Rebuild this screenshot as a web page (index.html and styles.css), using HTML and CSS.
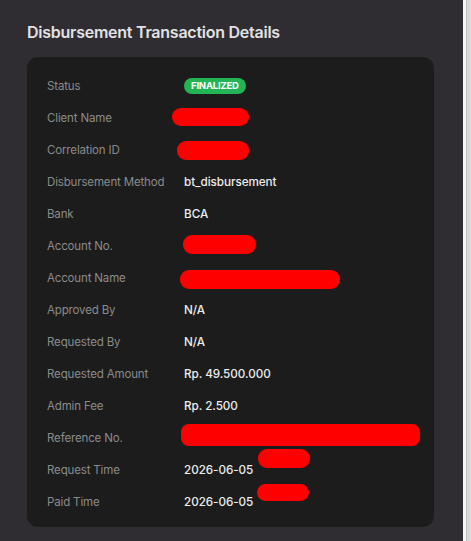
FILE: index.html
```html
<!DOCTYPE html>
<html lang="en">
  <head>
    <meta charset="UTF-8" />
    <meta name="viewport" content="width=device-width, initial-scale=1.0" />
    <title>Disbursement Transaction Details</title>
    <link rel="stylesheet" href="styles.css">
  </head>

  <body>
    <div class="page">
      <div class="panel">
        <h2 class="title">Disbursement Transaction Details</h2>

        <div class="card">
          <div class="row">
            <span class="label">Status</span>
            <span class="value"><span class="badge">FINALIZED</span></span>
          </div>
          <div class="row">
            <span class="label">Client Name</span>
            <span class="value"><span class="hidden hide-client"></span></span>
          </div>
          <div class="row">
            <span class="label">Correlation ID</span>
            <span class="value"><span class="hidden hide-corr"></span></span>
          </div>
          <div class="row">
            <span class="label">Disbursement Method</span>
            <span class="value">bt_disbursement</span>
          </div>
          <div class="row">
            <span class="label">Bank</span>
            <span class="value">BCA</span>
          </div>
          <div class="row">
            <span class="label">Account No.</span>
            <span class="value"><span class="hidden hide-accno"></span></span>
          </div>
          <div class="row">
            <span class="label">Account Name</span>
            <span class="value"><span class="hidden hide-accname"></span></span>
          </div>
          <div class="row">
            <span class="label">Approved By</span>
            <span class="value">N/A</span>
          </div>
          <div class="row">
            <span class="label">Requested By</span>
            <span class="value">N/A</span>
          </div>
          <div class="row">
            <span class="label">Requested Amount</span>
            <span class="value">Rp. 49.500.000</span>
          </div>
          <div class="row">
            <span class="label">Admin Fee</span>
            <span class="value">Rp. 2.500</span>
          </div>
          <div class="row">
            <span class="label">Reference No.</span>
            <span class="value"><span class="hidden hide-ref"></span></span>
          </div>
          <div class="row">
            <span class="label">Request Time</span>
            <span class="value">2026-06-05<span class="hidden hide-time"></span></span>
          </div>
          <div class="row">
            <span class="label">Paid Time</span>
            <span class="value">2026-06-05<span class="hidden hide-paid"></span></span>
          </div>
        </div>
      </div>
      <div class="edge"></div>
    </div>
  </body>
</html>
```

FILE: styles.css
```css
* {
  box-sizing: border-box;
}
html,
body {
  margin: 0;
  height: 100%;
  background: #dadada;
}
body {
  font-family: Inter, "Noto Sans", sans-serif;
}
.page {
  display: flex;
  height: 100%;
}
.panel {
  width: 463px;
  background: #2f2d31;
  padding: 20px 29px 0 27px;
}
.edge {
  width: 4px;
  background: #f6f6f6;
  border-right: 1px solid #bdbdbd;
}
.title {
  margin: 0 0 13px;
  font-size: 16px;
  line-height: 24px;
  font-weight: 600;
  color: #e2e2e4;
  letter-spacing: -0.25px;
}
.card {
  background: #1c1c1c;
  border-radius: 11px;
  padding: 13px 20px 8px;
  height: 470px;
}
.row {
  display: flex;
  align-items: center;
  height: 32px;
}
.label {
  width: 137px;
  font-size: 11.5px;
  color: #8b8b8b;
  letter-spacing: -0.15px;
}
.value {
  position: relative;
  font-size: 11.7px;
  font-weight: 500;
  color: #ececec;
  letter-spacing: -0.05px;
}
.badge {
  display: inline-block;
  background: #23b455;
  color: #fff;
  font-size: 9.5px;
  font-weight: 700;
  line-height: 16px;
  padding: 0 7px;
  border-radius: 8px;
  letter-spacing: -0.2px;
}

/* red marker strokes over private fields */
.hidden {
  position: absolute;
  background: #ff0000;
  border-radius: 9px;
}
.hide-client {
  left: -12px;
  top: -10px;
  width: 77px;
  height: 18px;
}
.hide-corr {
  left: -7px;
  top: -9px;
  width: 72px;
  height: 19px;
}
.hide-accno {
  left: -1px;
  top: -11px;
  width: 73px;
  height: 19px;
}
.hide-accname {
  left: -4px;
  top: -8px;
  width: 160px;
  height: 19px;
}
.hide-ref {
  left: -3px;
  top: -14px;
  width: 239px;
  height: 22px;
  border-radius: 8px;
}
.hide-time {
  left: 74px;
  top: -14px;
  width: 52px;
  height: 19px;
}
.hide-paid {
  left: 73px;
  top: -11px;
  width: 52px;
  height: 17px;
}
```
